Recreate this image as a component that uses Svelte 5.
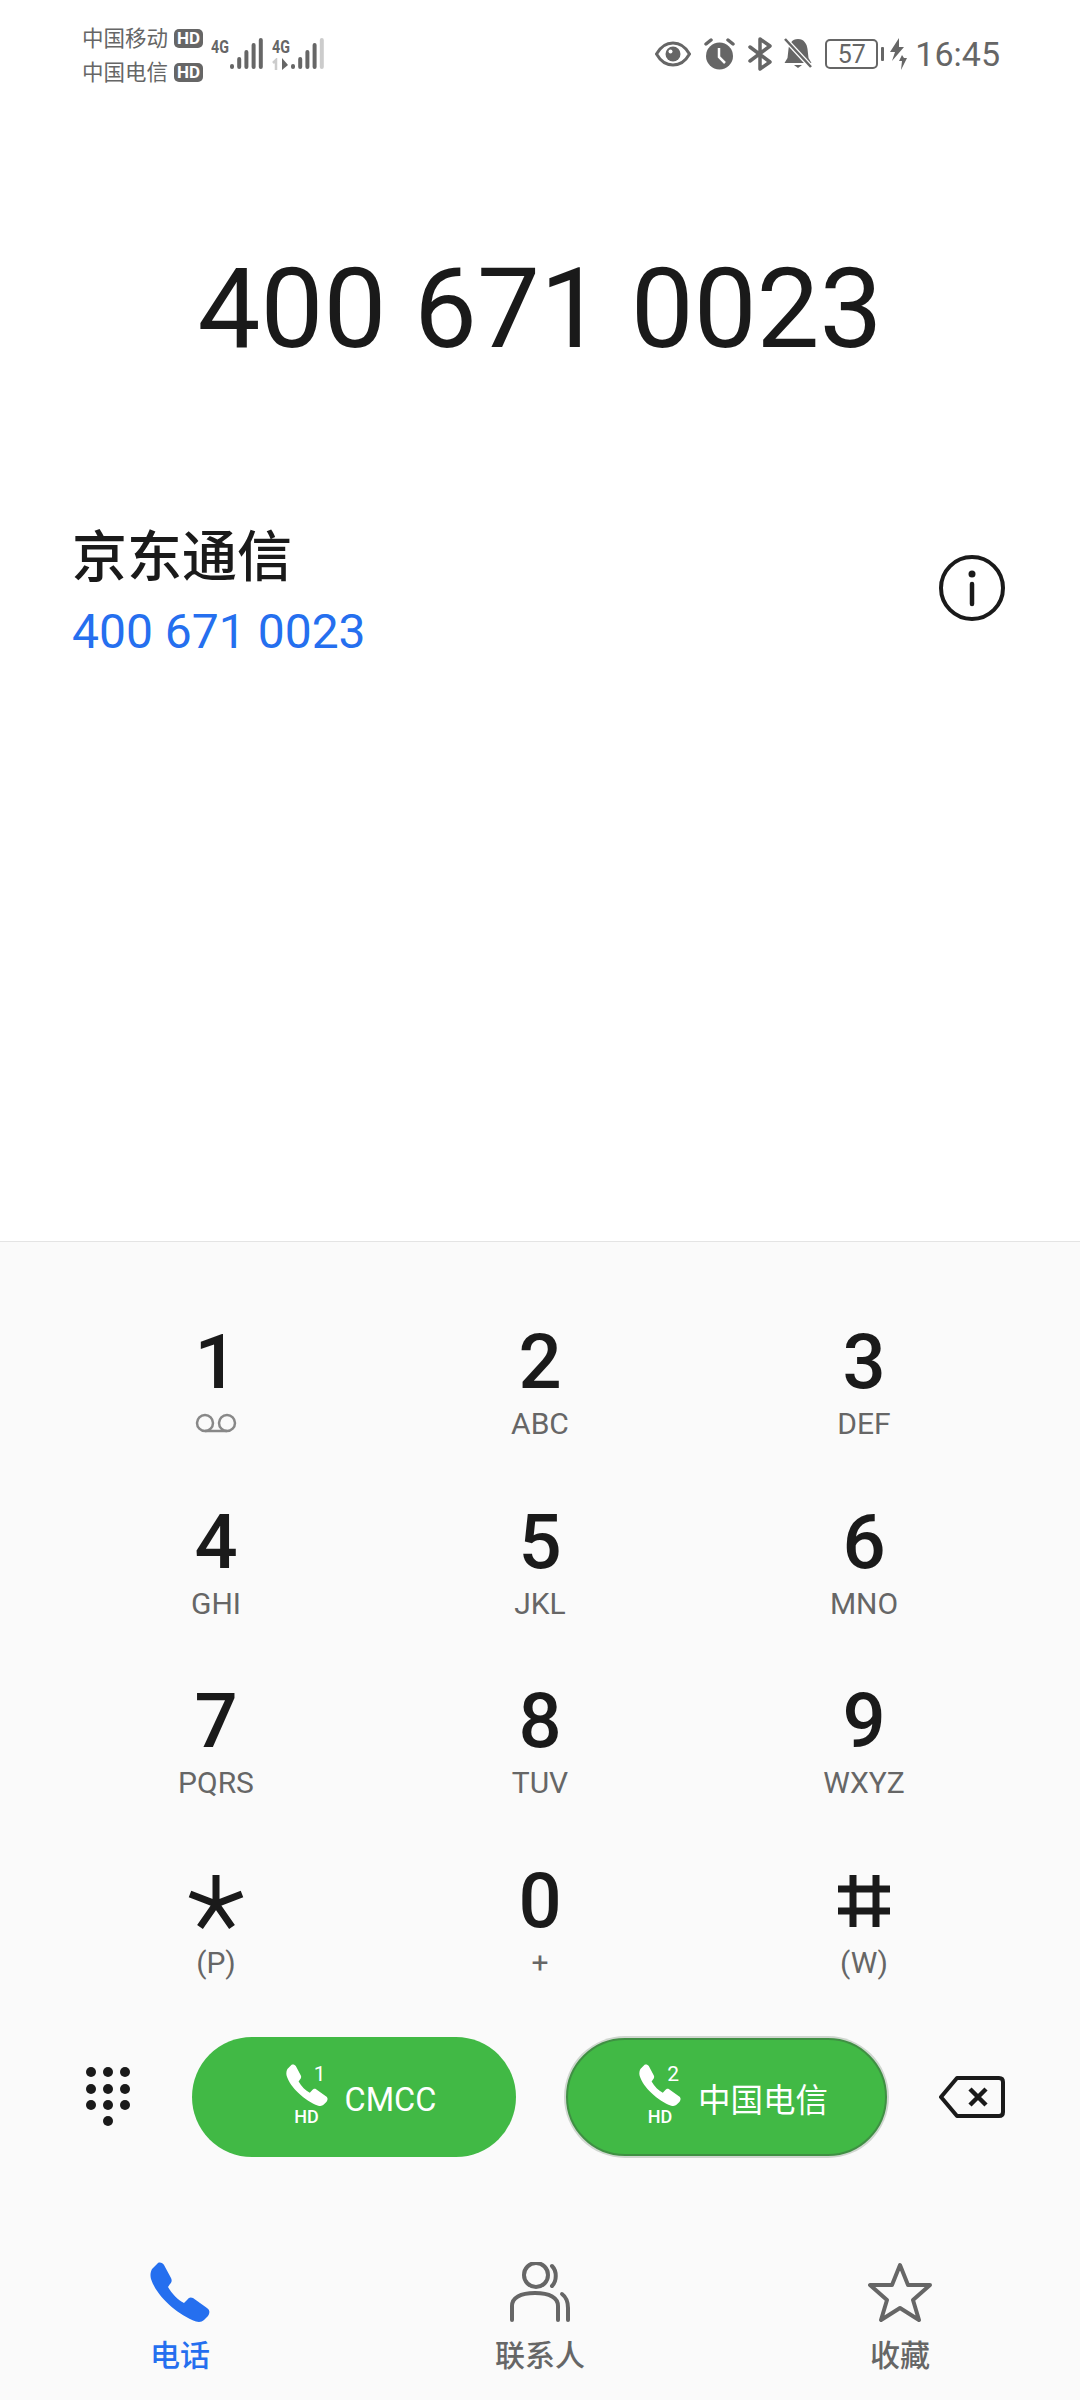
<script lang="ts">
	interface Key {
		digit: string;
		sub?: string;
		kind?: 'voicemail' | 'star' | 'hash';
	}

	const keys: Key[] = [
		{ digit: '1', kind: 'voicemail' },
		{ digit: '2', sub: 'ABC' },
		{ digit: '3', sub: 'DEF' },
		{ digit: '4', sub: 'GHI' },
		{ digit: '5', sub: 'JKL' },
		{ digit: '6', sub: 'MNO' },
		{ digit: '7', sub: 'PQRS' },
		{ digit: '8', sub: 'TUV' },
		{ digit: '9', sub: 'WXYZ' },
		{ digit: '*', sub: '(P)', kind: 'star' },
		{ digit: '0', sub: '+' },
		{ digit: '#', sub: '(W)', kind: 'hash' }
	];

	const sims = [
		{ slot: '1', name: 'CMCC', active: false },
		{ slot: '2', name: '中国电信', active: true }
	];

	const dots = [
		[5, 5], [22, 5], [39, 5],
		[5, 22], [22, 22], [39, 22],
		[5, 38], [22, 38], [39, 38],
		[22, 54]
	];

	// signal bar heights, weakest first
	const bars = [5, 12, 19, 26, 31];

	const phonePath =
		'M8 1C10 0 13 1 14 3L21 16C22 18 22 20 20 22L18 25C22 32 28 38 34 41L37 38C39 35 41 35 43 36L57 46C60 48 60 51 58 54L54 58C52 60 49 60.5 46 59.5C26 52 6 33 1 17C0 13 .5 10 2 7Z';
</script>

<div class="screen">
	<header class="status">
		<div class="carriers">
			<div class="carrier"><span>中国移动</span><b class="hd">HD</b></div>
			<div class="carrier"><span>中国电信</span><b class="hd">HD</b></div>
		</div>
		<div class="signal">
			<div class="net-col"><span class="net">4G</span></div>
			<svg width="33" height="32" viewBox="0 0 33 32">
				{#each bars as h, i}
					<rect x={i * 7.2} y={31 - h} width="4" height={h} rx="2" fill="#666" />
				{/each}
			</svg>
		</div>
		<div class="signal second">
			<div class="net-col">
				<span class="net">4G</span>
				<svg class="updown" width="17" height="12" viewBox="0 0 17 12">
					<path d="M4 12V2L1 5" stroke="#ccc" stroke-width="2.500" fill="none" />
					<path d="M10 0v12l6-5z" fill="#666" />
				</svg>
			</div>
			<svg width="33" height="32" viewBox="0 0 33 32">
				{#each bars as h, i}
					<rect x={i * 7.2} y={31 - h} width="4" height={h} rx="2" fill={i === 4 ? '#ccc' : '#666'} />
				{/each}
			</svg>
		</div>

		<div class="status-right">
			<svg class="st-eye" width="36" height="28" viewBox="0 0 36 28">
				<path d="M1.500 14C6 6 11.500 3 18 3s12 3 16.500 11C30 22 24.500 25 18 25S6 22 1.500 14Z" fill="none" stroke="#666" stroke-width="3" />
				<circle cx="18" cy="14" r="7.500" fill="#666" />
				<circle cx="15.500" cy="11.500" r="2" fill="#fff" />
			</svg>
			<svg class="st-alarm" width="31" height="32" viewBox="0 0 31 32">
				<circle cx="15.500" cy="18" r="13.500" fill="#666" />
				<path d="M15 10v9l6 6" stroke="#fff" stroke-width="2.500" fill="none" />
				<path d="M2 6l5-4M29 6l-5-4" stroke="#666" stroke-width="3.500" stroke-linecap="round" />
			</svg>
			<svg class="st-bt" width="24" height="34" viewBox="0 0 24 34">
				<path d="M2 10l20 15-10 7V2l10 7L2 24" fill="none" stroke="#666" stroke-width="3.500" stroke-linejoin="round" stroke-linecap="round" />
			</svg>
			<svg class="st-bell" width="28" height="32" viewBox="0 0 28 32">
				<path d="M14 1c6 0 9 5 9.500 10l1 9 3 5H.5l3-5 1-9C5 6 8 1 14 1Z" fill="#666" />
				<path d="M10 27h8l-4 3z" fill="#666" />
				<path d="M1 1l26 28" stroke="#fff" stroke-width="5" />
				<path d="M1 1l26 28" stroke="#666" stroke-width="2.500" />
			</svg>
			<div class="battery"><span>57</span></div>
			<i class="battery-cap"></i>
			<svg class="st-bolt" width="17" height="32" viewBox="0 0 17 32">
				<path d="M9 0L0 14h5L2 23l12-14H9zM12 17l-3 6h3l-1 9 6-12h-3z" fill="#666" />
			</svg>
			<span class="time">16:45</span>
		</div>
	</header>

	<section class="number">400 671 0023</section>

	<section class="match">
		<div>
			<div class="match-name">京东通信</div>
			<div class="match-number">400 671 0023</div>
		</div>
		<svg width="66" height="66" viewBox="0 0 66 66">
			<circle cx="33" cy="33" r="31" fill="none" stroke="#1a1a1a" stroke-width="4" />
			<circle cx="33" cy="19" r="3.500" fill="#1a1a1a" />
			<path d="M33 29v20" stroke="#1a1a1a" stroke-width="4.500" stroke-linecap="round" />
		</svg>
	</section>

	<section class="dialer">
		<div class="keys">
			{#each keys as key}
				<div class="key">
					{#if key.kind === 'star'}
						<svg class="symbol" role="img" aria-label="*" width="56" height="76" viewBox="0 0 56 76">
							<path d="M28 12v29M28 41L2 31M28 41L54 31M28 41L12 64M28 41L44 64" stroke="#1a1a1a" stroke-width="7" fill="none" />
						</svg>
					{:else if key.kind === 'hash'}
						<svg class="symbol" role="img" aria-label="#" width="54" height="76" viewBox="0 0 54 76">
							<path d="M16 12v52M39 12v52M1 26h52M1 48h52" stroke="#1a1a1a" stroke-width="7" fill="none" />
						</svg>
					{:else}
						<span class="digit">{key.digit}</span>
					{/if}
					{#if key.kind === 'voicemail'}
						<svg class="voicemail" width="42" height="20" viewBox="0 0 42 20">
							<circle cx="10" cy="10" r="8" fill="none" stroke="#888" stroke-width="2.500" />
							<circle cx="32" cy="10" r="8" fill="none" stroke="#888" stroke-width="2.500" />
							<path d="M10 18h22" stroke="#888" stroke-width="2.500" />
						</svg>
					{:else}
						<span class="sub">{key.sub}</span>
					{/if}
				</div>
			{/each}
		</div>

		<div class="call-row">
			<svg class="pad" width="44" height="60" viewBox="0 0 44 60">
				{#each dots as [cx, cy]}
					<circle {cx} {cy} r="5" fill="#1a1a1a" />
				{/each}
			</svg>
			{#each sims as sim}
				<button type="button" class="call" class:active={sim.active}>
					<span class="sim">
						<svg width="42" height="42" viewBox="0 0 60 60"><path d={phonePath} fill="#fff" /></svg>
						<span class="slot">{sim.slot}</span>
						<span class="call-hd">HD</span>
					</span>
					<span class="call-name">{sim.name}</span>
				</button>
			{/each}
			<svg class="back" width="66" height="42" viewBox="0 0 66 42">
				<path d="M18 2H60C62.500 2 64 3.500 64 6V36C64 38.500 62.500 40 60 40H18L2 21Z" fill="none" stroke="#1a1a1a" stroke-width="4" stroke-linejoin="round" />
				<path d="M31 13l16 16M47 13L31 29" stroke="#1a1a1a" stroke-width="4.500" />
			</svg>
		</div>

		<nav class="tabs">
			<div class="tab current">
				<svg width="60" height="60" viewBox="0 0 60 60"><path d={phonePath} fill="#256fef" /></svg>
				<span>电话</span>
			</div>
			<div class="tab">
				<svg width="60" height="60" viewBox="0 0 60 60" fill="none" stroke="#666" stroke-width="4" stroke-linecap="round">
					<circle cx="26" cy="13" r="12" />
					<path d="M42 4C47 9 47 19 42 24" />
					<path d="M2 58V44C2 36 10 31 25 31C40 31 48 36 48 44V58" />
					<path d="M52 32C56 35 58 40 58 46V58" />
				</svg>
				<span>联系人</span>
			</div>
			<div class="tab">
				<svg width="64" height="60" viewBox="0 0 64 60">
					<path d="M32 3L40 23H62L45 38L51 58L32 46L13 58L19 38L2 23H24Z" fill="none" stroke="#666" stroke-width="4" stroke-linejoin="round" />
				</svg>
				<span>收藏</span>
			</div>
		</nav>
	</section>
</div>

<style>
	:global(body) {
		margin: 0;
		background: #fff;
	}

	.screen {
		width: 1080px;
		height: 2400px;
		display: flex;
		flex-direction: column;
		overflow: hidden;
		font-family: Roboto, "Noto Sans CJK SC", sans-serif;
		color: #1a1a1a;
	}

	.status {
		height: 106px;
		flex: none;
		box-sizing: border-box;
		padding: 20px 80px 0 82px;
		display: flex;
		align-items: flex-start;
		color: #666;
	}

	.carriers {
		display: flex;
		flex-direction: column;
		gap: 5px;
		margin-top: 4px;
	}

	.carrier {
		display: flex;
		align-items: center;
		gap: 6px;
		font-size: 21.500px;
		line-height: 29px;
	}

	.hd {
		width: 29px;
		height: 19px;
		border-radius: 5px;
		background: #666;
		color: #fff;
		font-size: 17px;
		line-height: 19px;
		text-align: center;
		font-weight: 700;
	}

	.signal {
		margin-left: 8px;
		margin-top: 18px;
		display: flex;
		align-items: flex-start;
		gap: 1px;
	}

	.signal.second {
		margin-left: 9px;
	}

	.net-col {
		width: 18px;
		display: flex;
		flex-direction: column;
	}

	.net {
		height: 19px;
		font-size: 19px;
		line-height: 17px;
		font-weight: 700;
		white-space: nowrap;
		transform: scaleX(0.75);
		transform-origin: left;
	}

	.updown {
		margin-top: 1px;
	}

	.status-right {
		margin-left: auto;
		display: flex;
		align-items: center;
		height: 68px;
	}

	.st-alarm { margin-left: 13px; }
	.st-bt { margin-left: 13px; }
	.st-bell { margin-left: 12px; }

	.battery {
		margin-left: 13px;
		width: 53px;
		height: 30px;
		box-sizing: border-box;
		border: 2.500px solid #666;
		border-radius: 5px;
		display: flex;
		align-items: center;
		justify-content: center;
		font-size: 25px;
	}

	.battery-cap {
		width: 3px;
		height: 14px;
		margin-left: 3px;
		background: #666;
		border-radius: 1px;
	}

	.st-bolt { margin-left: 6px; }

	.time {
		margin-left: 8px;
		font-size: 34px;
	}

	.number {
		height: 200px;
		flex: none;
		margin: 101px 0 95px;
		text-align: center;
		font-size: 112px;
		line-height: 204px;
	}

	.match {
		flex: 1;
		box-sizing: border-box;
		padding: 0 75px 0 72px;
		display: flex;
		align-items: flex-start;
		justify-content: space-between;
	}

	.match svg {
		margin-top: 53px;
	}

	.match-name {
		margin-top: 20px;
		font-size: 55px;
		line-height: 70px;
		font-weight: 500;
	}

	.match-number {
		margin-top: 10px;
		font-size: 48px;
		line-height: 60px;
		color: #256fef;
	}

	.dialer {
		height: 1159px;
		flex: none;
		background: #fafafa;
		border-top: 1px solid #e4e4e4;
		box-sizing: border-box;
		display: flex;
		flex-direction: column;
	}

	.keys {
		margin-top: 80px;
		padding: 0 54px;
		display: grid;
		grid-template-columns: repeat(3, 324px);
		grid-auto-rows: 179.500px;
	}

	.key {
		display: flex;
		flex-direction: column;
		align-items: center;
	}

	.digit {
		height: 80px;
		font-size: 76px;
		line-height: 80px;
		font-weight: 500;
	}

	.symbol {
		height: 80px;
	}

	.sub {
		font-size: 30px;
		line-height: 40px;
		margin-top: 2px;
		color: #666;
	}

	.voicemail {
		margin-top: 11px;
	}

	.call-row {
		margin-top: -3px;
		height: 120px;
		display: flex;
		align-items: center;
		padding-left: 86px;
	}

	.pad {
		flex: none;
	}

	.call {
		width: 324px;
		height: 120px;
		margin-left: 62px;
		padding: 0 0 0 14px;
		border: none;
		border-radius: 60px;
		background: #41b945;
		color: #fff;
		font: inherit;
		display: flex;
		align-items: center;
		justify-content: center;
		gap: 17px;
	}

	.call.active {
		width: 321px;
		height: 118px;
		margin-left: 50px;
		border: 2px solid #3f9043;
		box-sizing: border-box;
		box-shadow: 0 0 0 2px #cfd6cf;
	}

	.sim {
		display: grid;
		grid-template-columns: 42px;
		justify-items: center;
		position: relative;
		margin-top: -3px;
	}

	.slot {
		position: absolute;
		top: -3px;
		right: 2px;
		font-size: 21px;
		line-height: 26px;
	}

	.call-hd {
		font-size: 18px;
		line-height: 20px;
		font-weight: 500;
		margin-top: 1px;
	}

	.call-name {
		font-size: 32.500px;
		padding-top: 6px;
	}

	.call.active .call-name {
		padding-top: 0;
	}

	.back {
		flex: none;
		margin-left: 52px;
	}

	.tabs {
		margin-top: 105px;
		display: grid;
		grid-template-columns: repeat(3, 360px);
	}

	.tab {
		display: flex;
		flex-direction: column;
		align-items: center;
		color: #666;
		font-size: 30px;
		line-height: 40px;
		font-weight: 500;
	}

	.tab span {
		margin-top: 14px;
	}

	.tab.current {
		color: #256fef;
	}
</style>
